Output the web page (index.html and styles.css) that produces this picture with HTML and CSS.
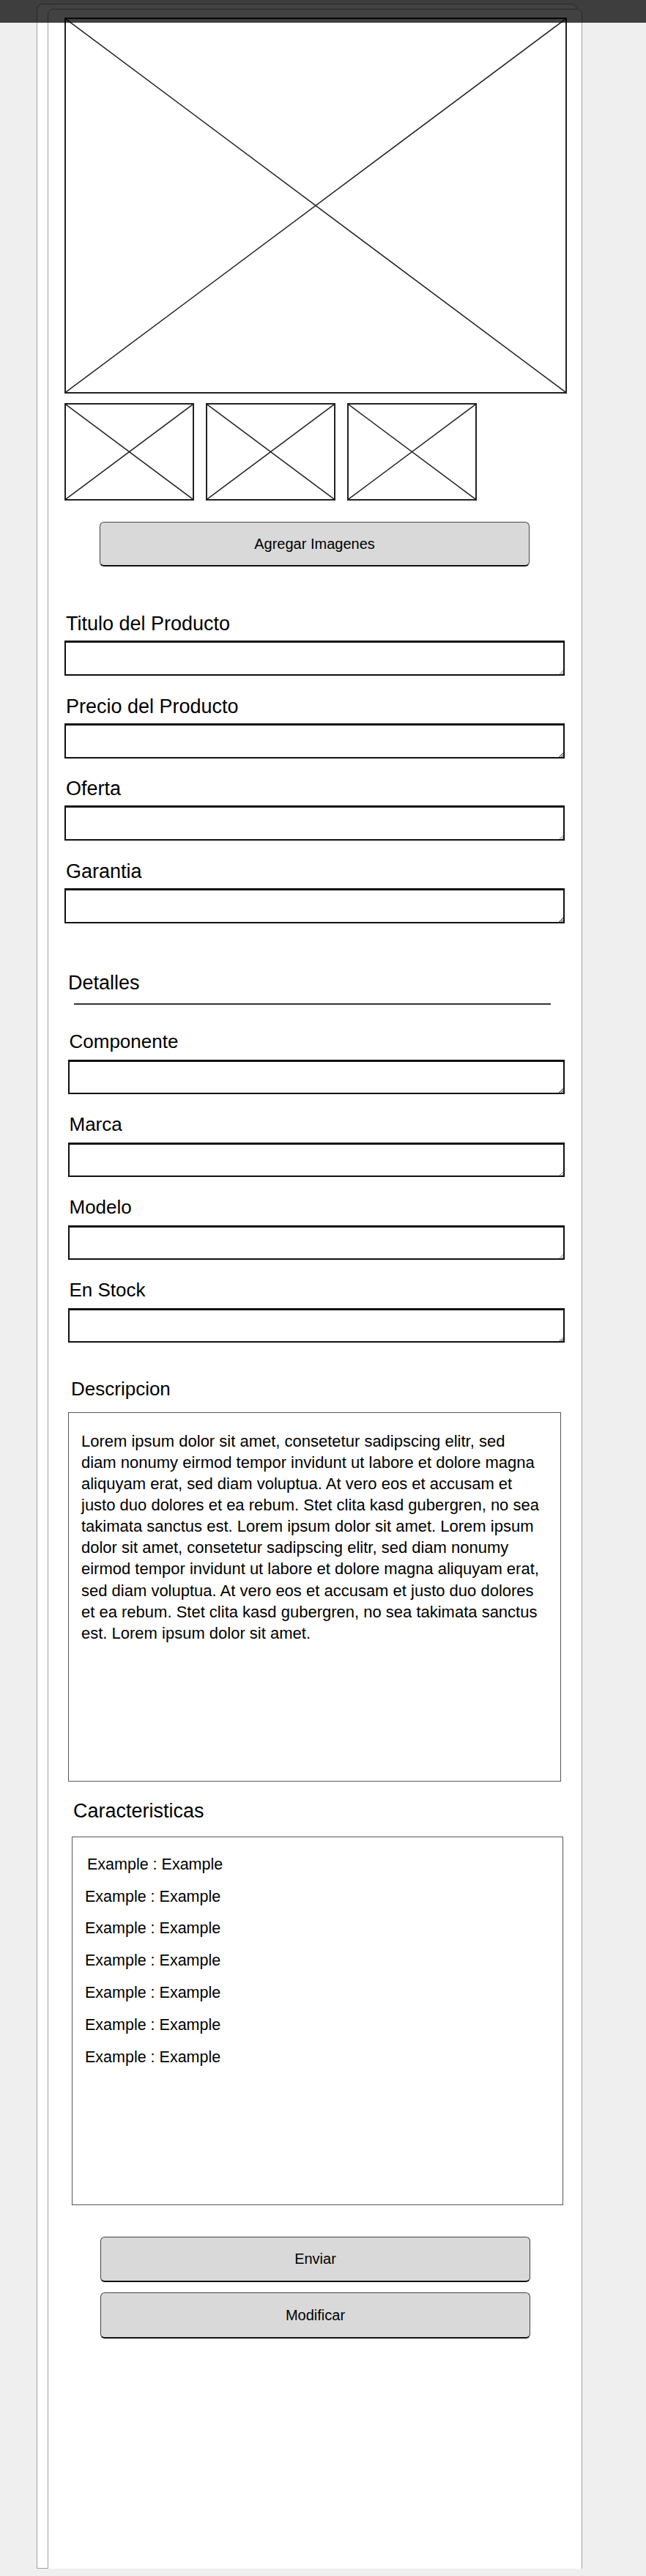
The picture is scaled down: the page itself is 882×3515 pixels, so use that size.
FILE: index.html
```html
<!DOCTYPE html>
<html lang="es">
<head>
<meta charset="utf-8">
<title>Producto</title>
<link rel="stylesheet" href="styles.css">
</head>
<body>
<div class="topbar"></div>
<div class="sheet-back">
  <div class="sheet">
    <div class="ph ph-main">
      <svg viewBox="0 0 100 100" preserveAspectRatio="none"><line x1="0" y1="0" x2="100" y2="100" vector-effect="non-scaling-stroke"/><line x1="100" y1="0" x2="0" y2="100" vector-effect="non-scaling-stroke"/></svg>
    </div>
    <div class="thumbs">
      <div class="ph ph-thumb"><svg viewBox="0 0 100 100" preserveAspectRatio="none"><line x1="0" y1="0" x2="100" y2="100" vector-effect="non-scaling-stroke"/><line x1="100" y1="0" x2="0" y2="100" vector-effect="non-scaling-stroke"/></svg></div>
      <div class="ph ph-thumb"><svg viewBox="0 0 100 100" preserveAspectRatio="none"><line x1="0" y1="0" x2="100" y2="100" vector-effect="non-scaling-stroke"/><line x1="100" y1="0" x2="0" y2="100" vector-effect="non-scaling-stroke"/></svg></div>
      <div class="ph ph-thumb"><svg viewBox="0 0 100 100" preserveAspectRatio="none"><line x1="0" y1="0" x2="100" y2="100" vector-effect="non-scaling-stroke"/><line x1="100" y1="0" x2="0" y2="100" vector-effect="non-scaling-stroke"/></svg></div>
    </div>
    <button class="btn btn-add" type="button">Agregar Imagenes</button>

    <div class="fields">
      <div class="field"><div class="label">Titulo del Producto</div><div class="input"></div></div>
      <div class="field"><div class="label">Precio del Producto</div><div class="input"></div></div>
      <div class="field"><div class="label">Oferta</div><div class="input"></div></div>
      <div class="field"><div class="label">Garantia</div><div class="input"></div></div>
    </div>

    <div class="details">
      <div class="section-title">Detalles</div>
      <div class="rule"></div>
      <div class="dfields">
        <div class="dfield"><div class="dlabel">Componente</div><div class="input dinput"></div></div>
        <div class="dfield"><div class="dlabel">Marca</div><div class="input dinput"></div></div>
        <div class="dfield"><div class="dlabel">Modelo</div><div class="input dinput"></div></div>
        <div class="dfield"><div class="dlabel">En Stock</div><div class="input dinput"></div></div>
      </div>
    </div>

    <div class="desc-section">
      <div class="desc-label">Descripcion</div>
      <div class="textbox">Lorem ipsum dolor sit amet, consetetur sadipscing elitr, sed<br>diam nonumy eirmod tempor invidunt ut labore et dolore magna<br>aliquyam erat, sed diam voluptua. At vero eos et accusam et<br>justo duo dolores et ea rebum. Stet clita kasd gubergren, no sea<br>takimata sanctus est. Lorem ipsum dolor sit amet. Lorem ipsum<br>dolor sit amet, consetetur sadipscing elitr, sed diam nonumy<br>eirmod tempor invidunt ut labore et dolore magna aliquyam erat,<br>sed diam voluptua. At vero eos et accusam et justo duo dolores<br>et ea rebum. Stet clita kasd gubergren, no sea takimata sanctus<br>est. Lorem ipsum dolor sit amet.</div>
    </div>

    <div class="char-section">
      <div class="char-label">Caracteristicas</div>
      <div class="charbox">
        <div class="item first">Example : Example</div>
        <div class="item">Example : Example</div>
        <div class="item">Example : Example</div>
        <div class="item">Example : Example</div>
        <div class="item">Example : Example</div>
        <div class="item">Example : Example</div>
        <div class="item">Example : Example</div>
      </div>
    </div>

    <div class="actions">
      <button class="btn btn-send" type="button">Enviar</button>
      <button class="btn btn-edit" type="button">Modificar</button>
    </div>
  </div>
</div>
</body>
</html>
```
FILE: styles.css
```css
html, body {
  margin: 0;
  padding: 0;
}
body {
  background: #efefef;
  font-family: "Liberation Sans", Arial, sans-serif;
  color: #000;
}
.topbar {
  position: absolute;
  top: 0;
  left: 0;
  width: 100%;
  height: 31px;
  background: rgba(0, 0, 0, 0.74);
  z-index: 5;
}
.sheet-back {
  box-sizing: border-box;
  width: 738px;
  margin: 5px 0 0 50px;
  border: 1px solid #a0a0a0;
  border-radius: 8px 8px 0 0;
  background: #fff;
}
.sheet {
  box-sizing: border-box;
  width: 730px;
  min-height: 3496px;
  margin: 6px 0 -4px 14px;
  border: 1px solid #a0a0a0;
  border-radius: 8px 8px 0 0;
  background: #fff;
  padding: 11px 20px 0 22px;
}
.ph {
  box-sizing: border-box;
  border: 2px solid #222;
  background: #fff;
}
.ph svg {
  display: block;
  width: 100%;
  height: 100%;
}
.ph svg line {
  stroke: #222;
  stroke-width: 1.5;
}
.ph-main {
  height: 513px;
}
.thumbs {
  display: flex;
  gap: 16px;
  margin-top: 13px;
}
.ph-thumb {
  width: 177px;
  height: 133px;
}
.btn {
  display: flex;
  align-items: center;
  justify-content: center;
  box-sizing: border-box;
  width: 587px;
  height: 61px;
  padding: 0;
  background: #d9d9d9;
  border: 1.5px solid #444;
  border-bottom: 2.5px solid #111;
  border-radius: 6px;
  font-family: "Liberation Sans", Arial, sans-serif;
  font-size: 20px;
  color: #000;
}
.btn-add {
  margin: 29px 0 0 48px;
}
.fields {
  display: flex;
  flex-direction: column;
  gap: 25.5px;
  margin-top: 62px;
}
.label {
  font-size: 27px;
  line-height: 32px;
  margin: 0 0 7px 2px;
}
.input {
  box-sizing: border-box;
  width: 683px;
  height: 48px;
  border: 2px solid #111;
  border-top-width: 3px;
  background: #fff linear-gradient(135deg, transparent 50%, #777 50%, #777 62%, transparent 62%, transparent 75%, #777 75%, #777 87%, transparent 87%) no-repeat right bottom / 6px 6px;
}
.details {
  margin-top: 65.5px;
  padding-left: 5px;
}
.section-title {
  font-size: 27px;
  line-height: 32px;
}
.rule {
  width: 651px;
  height: 2px;
  margin: 12.4px 0 0 8px;
  background: #333;
}
.dfields {
  display: flex;
  flex-direction: column;
  gap: 25.6px;
  margin-top: 34.6px;
}
.dlabel {
  font-size: 26px;
  line-height: 30px;
  margin: 0 0 10.3px 1.5px;
}
.dinput {
  width: 678px;
  height: 47px;
}
.desc-section {
  margin-top: 47.6px;
  padding-left: 5px;
}
.desc-label {
  font-size: 26px;
  line-height: 30px;
  margin: 0 0 17.7px 4px;
}
.textbox {
  box-sizing: border-box;
  width: 673px;
  height: 504px;
  border: 1.5px solid #555;
  padding: 23.5px 10px 0 17px;
  font-size: 22px;
  line-height: 29.13px;
  white-space: nowrap;
}
.char-section {
  margin-top: 24.2px;
  padding-left: 10px;
}
.char-label {
  font-size: 27px;
  line-height: 32px;
  margin: 0 0 18.3px 2px;
}
.charbox {
  box-sizing: border-box;
  width: 671px;
  height: 503px;
  border: 1.5px solid #555;
  padding: 16px 0 0 17px;
  font-size: 21.5px;
  line-height: 43.8px;
}
.item.first {
  padding-left: 3px;
}
.actions {
  display: flex;
  flex-direction: column;
  gap: 14px;
  margin-top: 43.3px;
  padding-left: 49px;
}
.btn-send {
  height: 62px;
}
.btn-edit {
  height: 63px;
}
```
